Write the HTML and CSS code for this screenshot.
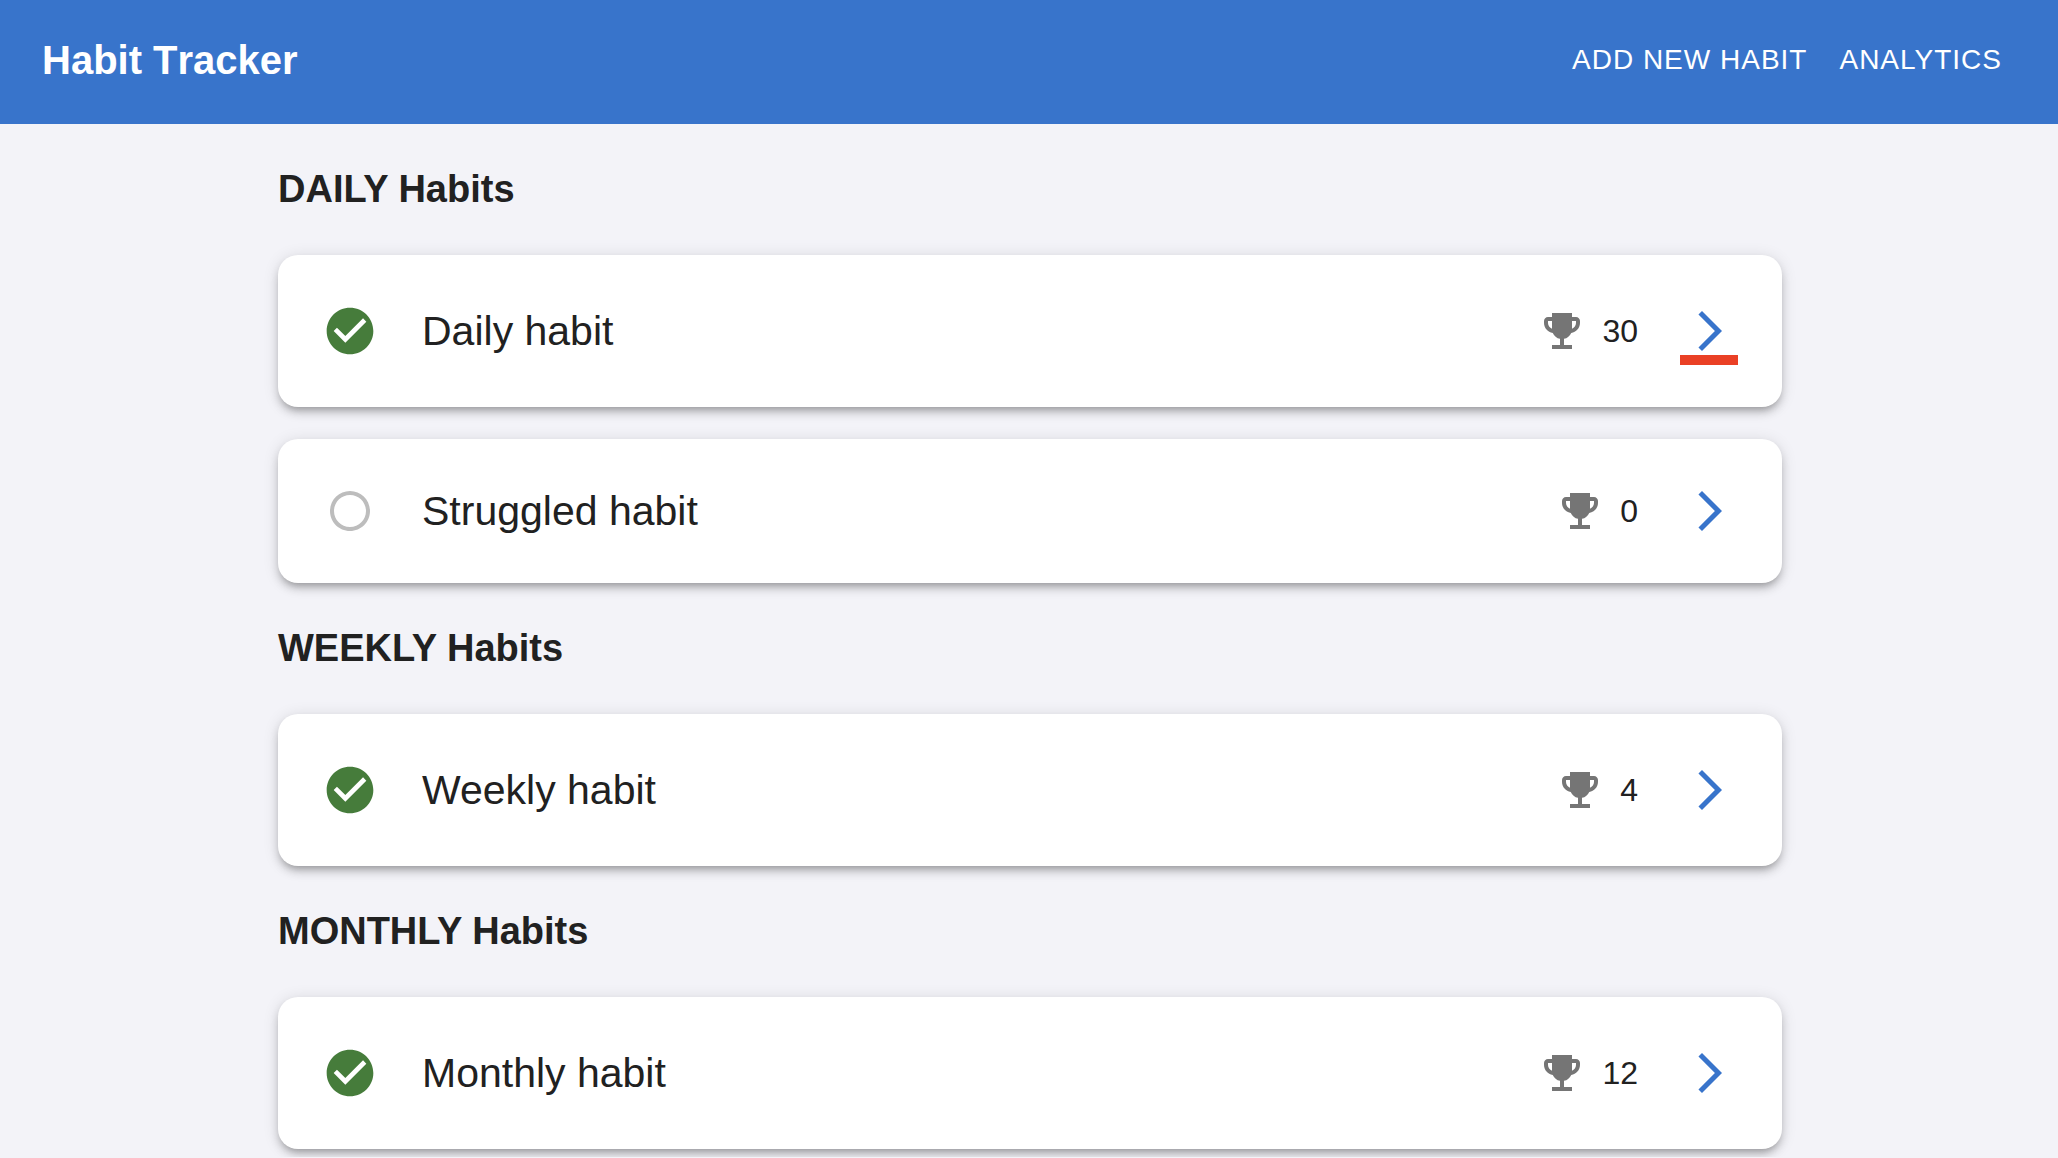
FILE: index.html
```html
<!DOCTYPE html>
<html lang="en">
<head>
  <meta charset="utf-8">
  <meta name="viewport" content="width=device-width, initial-scale=1">
  <title>Habit Tracker</title>
  <link rel="stylesheet" href="styles.css">
</head>
<body>
  <svg class="sprite" aria-hidden="true">
    <symbol id="check-circle" viewBox="0 0 24 24">
      <path d="M12 2C6.48 2 2 6.48 2 12s4.48 10 10 10 10-4.48 10-10S17.52 2 12 2zm-2 15l-5-5 1.41-1.41L10 14.17l7.59-7.59L19 8l-9 9z"/>
    </symbol>
    <symbol id="circle" viewBox="0 0 24 24">
      <path d="M12 2C6.47 2 2 6.47 2 12s4.47 10 10 10 10-4.47 10-10S17.53 2 12 2zm0 18c-4.41 0-8-3.59-8-8s3.59-8 8-8 8 3.59 8 8-3.59 8-8 8z"/>
    </symbol>
    <symbol id="trophy" viewBox="0 0 24 24">
      <path d="M19 5h-2V3H7v2H5c-1.1 0-2 .9-2 2v1c0 2.55 1.92 4.63 4.39 4.94.63 1.5 1.98 2.63 3.61 2.96V19H7v2h10v-2h-4v-3.1c1.63-.33 2.98-1.46 3.61-2.96C19.08 12.63 21 10.55 21 8V7c0-1.1-.9-2-2-2zM5 8V7h2v3.82C5.84 10.4 5 9.3 5 8zm14 0c0 1.3-.84 2.4-2 2.82V7h2v1z"/>
    </symbol>
    <symbol id="chevron" viewBox="0 0 24 24">
      <path d="M6.23 20.23 8 22l10-10L8 2 6.23 3.77 14.46 12z"/>
    </symbol>
  </svg>

  <header class="app-bar">
    <h1 class="app-title">Habit Tracker</h1>
    <nav class="app-nav">
      <a class="nav-link" href="#new">ADD NEW HABIT</a>
      <a class="nav-link" href="#analytics">ANALYTICS</a>
    </nav>
  </header>

  <main class="habits">
    <section class="group">
      <h2 class="group-title">DAILY Habits</h2>
      <div class="cards">
        <article class="card">
          <label class="habit">
            <input class="habit-input" type="checkbox" checked>
            <svg class="icon check done" aria-hidden="true"><use href="#check-circle"/></svg>
            <span class="habit-name">Daily habit</span>
          </label>
          <div class="streak">
            <svg class="icon trophy" aria-hidden="true"><use href="#trophy"/></svg>
            <span>30</span>
          </div>
          <a class="open marked" href="#daily" aria-label="Open Daily habit"><svg class="icon" aria-hidden="true"><use href="#chevron"/></svg></a>
        </article>
        <article class="card">
          <label class="habit">
            <input class="habit-input" type="checkbox">
            <svg class="icon check" aria-hidden="true"><use href="#circle"/></svg>
            <span class="habit-name">Struggled habit</span>
          </label>
          <div class="streak">
            <svg class="icon trophy" aria-hidden="true"><use href="#trophy"/></svg>
            <span>0</span>
          </div>
          <a class="open" href="#struggled" aria-label="Open Struggled habit"><svg class="icon" aria-hidden="true"><use href="#chevron"/></svg></a>
        </article>
      </div>
    </section>

    <section class="group">
      <h2 class="group-title">WEEKLY Habits</h2>
      <div class="cards">
        <article class="card">
          <label class="habit">
            <input class="habit-input" type="checkbox" checked>
            <svg class="icon check done" aria-hidden="true"><use href="#check-circle"/></svg>
            <span class="habit-name">Weekly habit</span>
          </label>
          <div class="streak">
            <svg class="icon trophy" aria-hidden="true"><use href="#trophy"/></svg>
            <span>4</span>
          </div>
          <a class="open" href="#weekly" aria-label="Open Weekly habit"><svg class="icon" aria-hidden="true"><use href="#chevron"/></svg></a>
        </article>
      </div>
    </section>

    <section class="group">
      <h2 class="group-title">MONTHLY Habits</h2>
      <div class="cards">
        <article class="card">
          <label class="habit">
            <input class="habit-input" type="checkbox" checked>
            <svg class="icon check done" aria-hidden="true"><use href="#check-circle"/></svg>
            <span class="habit-name">Monthly habit</span>
          </label>
          <div class="streak">
            <svg class="icon trophy" aria-hidden="true"><use href="#trophy"/></svg>
            <span>12</span>
          </div>
          <a class="open" href="#monthly" aria-label="Open Monthly habit"><svg class="icon" aria-hidden="true"><use href="#chevron"/></svg></a>
        </article>
      </div>
    </section>
  </main>
</body>
</html>
```

FILE: styles.css
```css
* {
  box-sizing: border-box;
}

body {
  margin: 0;
  background: #f3f3f8;
  color: #212121;
  font-family: "Liberation Sans", Arial, Helvetica, sans-serif;
}

.sprite {
  display: none;
}

.app-bar {
  display: flex;
  align-items: center;
  justify-content: space-between;
  padding: 36px 56px 40px 42px;
  background: #3874cb;
  color: #fff;
}

.app-title {
  margin: 0;
  font-size: 40px;
  font-kerning: none;
  line-height: 48px;
}

.app-nav {
  display: flex;
  gap: 32px;
}

.nav-link {
  color: inherit;
  font-size: 28px;
  line-height: 48px;
  letter-spacing: 1px;
  text-decoration: none;
}

.habits {
  max-width: 1506px;
  margin: 0 auto;
  padding: 0 0 8px 2px;
}

.group {
  display: flow-root;
}

.group-title {
  margin: 44px 0;
  font-size: 38px;
  line-height: 43px;
}

.cards {
  display: grid;
  gap: 32px;
}

.card {
  display: flex;
  align-items: center;
  gap: 48px;
  padding: 48px 48px 48px 44px;
  border-radius: 20px;
  background: #fff;
  box-shadow:
    0 6px 6px -4px rgba(0, 0, 0, 0.2),
    0 6px 8px rgba(0, 0, 0, 0.14),
    0 2px 16px rgba(0, 0, 0, 0.12);
}

.habit {
  position: relative;
  display: flex;
  flex: 1;
  align-items: center;
  gap: 44px;
  font-size: 41px;
  line-height: 48px;
  cursor: pointer;
}

.habit-input {
  position: absolute;
  inset: 0 auto 0 0;
  width: 56px;
  margin: 0;
  opacity: 0;
}

.icon {
  display: block;
  flex: none;
  width: 48px;
  height: 48px;
  fill: currentColor;
}

.check {
  margin: 0 4px;
  color: #bdbdbd;
}

.check.done {
  width: 56px;
  height: 56px;
  margin: 0;
  color: #467c3b;
}

.streak {
  display: flex;
  align-items: center;
  gap: 16px;
  font-size: 32px;
  line-height: 48px;
}

.trophy {
  color: #757575;
}

.open {
  position: relative;
  color: #3874cb;
}

/* Highlight bar under the arrow */
.marked::after {
  content: "";
  position: absolute;
  top: 48px;
  right: -4px;
  left: -6px;
  height: 10px;
  background: #ea4025;
}
```
